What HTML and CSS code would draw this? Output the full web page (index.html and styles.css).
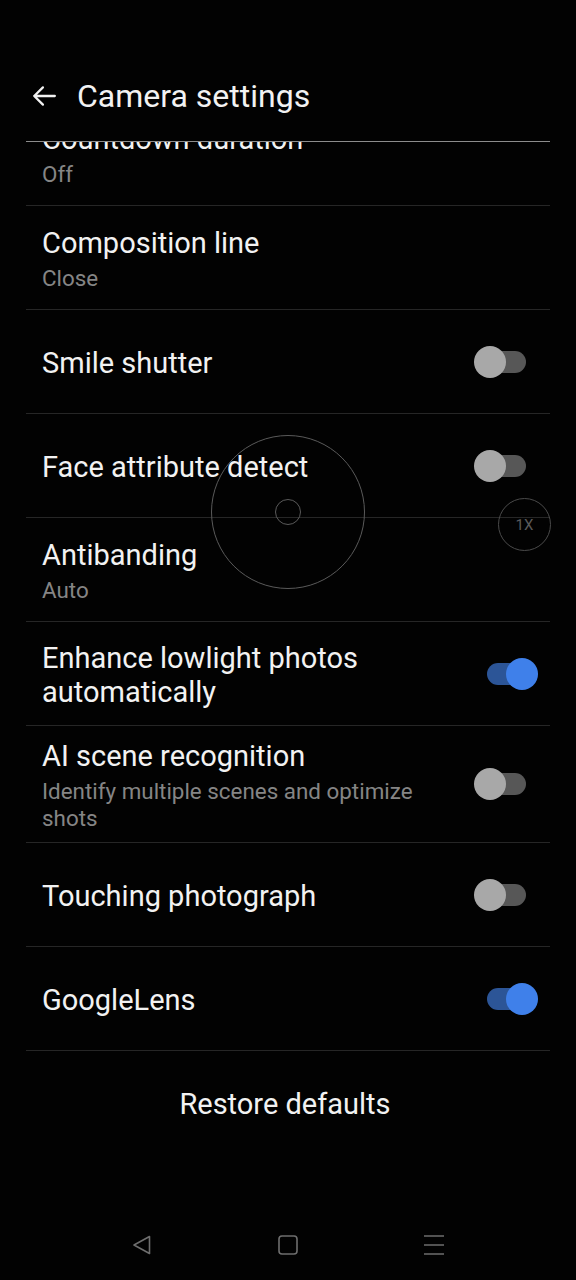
FILE: index.html
```html
<!DOCTYPE html>
<html lang="en">
<head>
  <meta charset="UTF-8">
  <title>Camera settings</title>
  <link rel="stylesheet" href="styles.css">
</head>
<body>
  <div class="screen">
    <header class="topbar">
      <div class="topbar-row">
        <svg class="back" width="26" height="26" viewBox="0 0 24 24">
          <path d="M22 12H3 M11 4l-8 8 8 8" fill="none" stroke="#f2f2f2" stroke-width="2.1" stroke-linecap="round" stroke-linejoin="round"/>
        </svg>
        <h1>Camera settings</h1>
      </div>
    </header>

    <div class="viewport">
      <ul class="settings">
        <li class="item">
          <div class="text">
            <div class="title">Countdown duration</div>
            <div class="sub">Off</div>
          </div>
        </li>
        <li class="item">
          <div class="text">
            <div class="title">Composition line</div>
            <div class="sub">Close</div>
          </div>
        </li>
        <li class="item">
          <div class="text"><div class="title">Smile shutter</div></div>
          <span class="switch"></span>
        </li>
        <li class="item">
          <div class="text"><div class="title">Face attribute detect</div></div>
          <span class="switch"></span>
        </li>
        <li class="item">
          <div class="text">
            <div class="title">Antibanding</div>
            <div class="sub">Auto</div>
          </div>
        </li>
        <li class="item">
          <div class="text"><div class="title">Enhance lowlight photos automatically</div></div>
          <span class="switch on"></span>
        </li>
        <li class="item tall">
          <div class="text">
            <div class="title">AI scene recognition</div>
            <div class="sub">Identify multiple scenes and optimize shots</div>
          </div>
          <span class="switch"></span>
        </li>
        <li class="item">
          <div class="text"><div class="title">Touching photograph</div></div>
          <span class="switch"></span>
        </li>
        <li class="item">
          <div class="text"><div class="title">GoogleLens</div></div>
          <span class="switch on"></span>
        </li>
      </ul>
      <div class="restore">Restore defaults</div>
    </div>

    <nav class="navbar">
      <svg width="22" height="22" viewBox="0 0 22 22">
        <path d="M18.5 2.5 L3 11 L18.5 19.5 Z" fill="none" stroke="#6e6e6e" stroke-width="1.6" stroke-linejoin="round"/>
      </svg>
      <svg width="22" height="22" viewBox="0 0 22 22">
        <rect x="2" y="2" width="18" height="18" rx="3" fill="none" stroke="#6e6e6e" stroke-width="1.6"/>
      </svg>
      <svg width="22" height="22" viewBox="0 0 22 22">
        <path d="M1 2H21 M1 11H21 M1 20H21" stroke="#6e6e6e" stroke-width="1.6"/>
      </svg>
    </nav>

    <div class="focus-ring"><span class="focus-dot"></span></div>
    <div class="zoom-badge">1X</div>
  </div>
</body>
</html>
```

FILE: styles.css
```css
* {
  box-sizing: border-box;
}
body {
  margin: 0;
  background: #000;
  font-family: Roboto, 'Noto Sans', sans-serif;
  color: #f2f2f2;
}
.screen {
  position: relative;
  width: 576px;
  height: 1280px;
  background: #020202;
  display: flex;
  flex-direction: column;
  overflow: hidden;
}
.topbar {
  height: 142px;
  padding: 0 26px;
  display: flex;
  flex-direction: column;
  justify-content: flex-end;
  position: relative;
  z-index: 2;
  background: #020202;
}
.topbar-row {
  height: 52px;
  margin-bottom: 19px;
  display: flex;
  align-items: center;
  padding-left: 5px;
}
.topbar::after {
  content: '';
  display: block;
  height: 1px;
  background: #8c8c8c;
}
.back {
  flex: none;
}
h1 {
  margin: 0 0 0 20px;
  font-size: 32px;
  font-weight: 400;
}
.viewport {
  flex: 1;
  padding: 0 26px;
}
.settings {
  list-style: none;
  margin: -40px 0 0 0;
  padding: 0;
}
.item {
  min-height: 104px;
  padding: 0 12px 0 16px;
  border-bottom: 1px solid #262626;
  display: flex;
  align-items: center;
  gap: 20px;
}
.item.tall {
  min-height: 117px;
}
.text {
  flex: 1;
  padding-top: 4px;
}
.title {
  font-size: 29px;
  line-height: 33.5px;
  color: #f2f2f2;
}
.sub {
  margin-top: 5px;
  font-size: 22.4px;
  line-height: 27px;
  color: #858585;
}
.switch {
  position: relative;
  flex: none;
  width: 64px;
  height: 32px;
}
.switch::before {
  content: '';
  position: absolute;
  left: 4px;
  right: 12px;
  top: 5px;
  height: 22px;
  border-radius: 11px;
  background: #575757;
}
.switch::after {
  content: '';
  position: absolute;
  left: 0;
  top: 0;
  width: 32px;
  height: 32px;
  border-radius: 50%;
  background: #a8a8a8;
}
.switch.on::before {
  left: 13px;
  right: 3px;
  background: #2c5597;
}
.switch.on::after {
  left: 32px;
  background: #3f80ea;
}
.restore {
  text-align: center;
  font-size: 29px;
  line-height: 34px;
  padding: 36px 6px 0 0;
  color: #f2f2f2;
}
.navbar {
  height: 80px;
  display: grid;
  grid-template-columns: 146px 146px 146px;
  justify-content: center;
  justify-items: center;
  align-items: center;
  padding-top: 10px;
}
.focus-ring {
  position: absolute;
  left: 211px;
  top: 435px;
  width: 154px;
  height: 154px;
  border: 1.5px solid #5a5a5a;
  border-radius: 50%;
  display: flex;
  align-items: center;
  justify-content: center;
}
.focus-dot {
  width: 26px;
  height: 26px;
  border: 1.5px solid #5a5a5a;
  border-radius: 50%;
}
.zoom-badge {
  position: absolute;
  left: 498px;
  top: 498px;
  width: 53px;
  height: 53px;
  border: 1.5px solid #4a4a4a;
  border-radius: 50%;
  display: flex;
  align-items: center;
  justify-content: center;
  font-size: 15px;
  color: #5a5a5a;
}
```
